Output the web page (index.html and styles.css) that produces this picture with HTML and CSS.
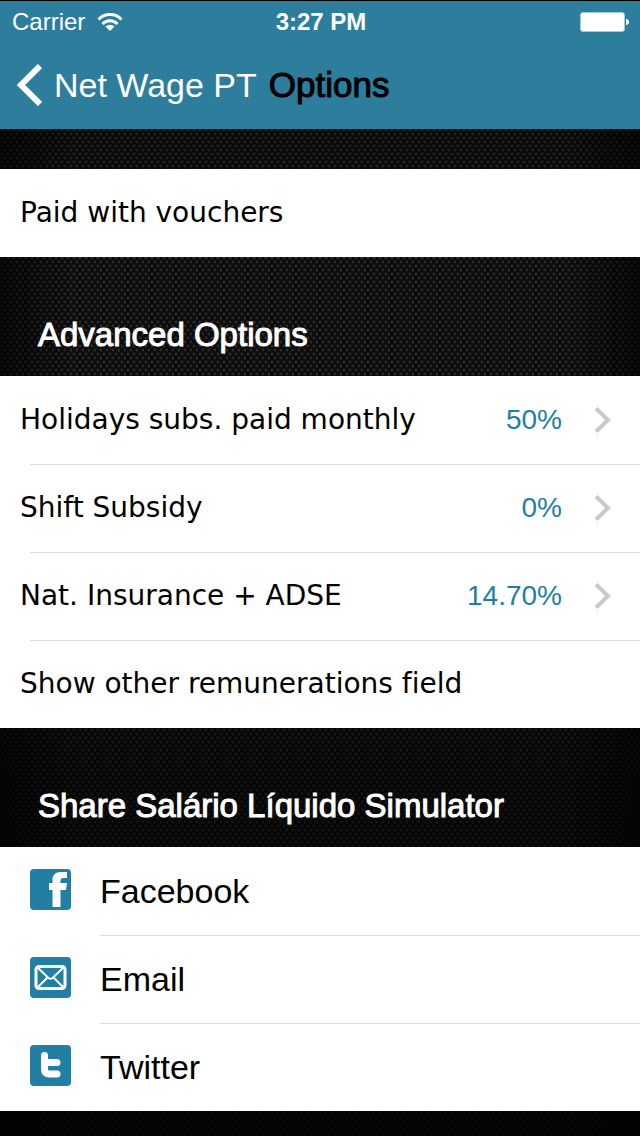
FILE: index.html
```
<!doctype html>
<html lang="en">
<head>
    <meta charset="utf-8">
    <meta name="viewport" content="width=device-width, initial-scale=1">
    <title>Options</title>
    <link rel="stylesheet" href="styles.css">
</head>
<body>
<header class="top">
    <div class="status">
        <div class="carrier">
            <span>Carrier</span>
            <svg class="wifi" viewBox="0 0 26 20" width="26" height="20">
                <path d="M1.500 7.500A16 16 0 0 1 24.500 7.500M5.500 12A10.500 10.500 0 0 1 20.500 12" fill="none" stroke="#fff" stroke-width="3"/>
                <path d="M8.500 14.500A6.500 6.500 0 0 1 17.500 14.500L13 19Z" fill="#fff"/>
            </svg>
        </div>
        <div class="clock">3:27 PM</div>
        <div class="power">
            <svg viewBox="0 0 50 20" width="50" height="20">
                <rect x="0.500" y="0.500" width="44" height="19" rx="2.500" fill="#fff" stroke="#a5cbd9"/>
                <path d="M46 7c4 0 4 6 0 6z" fill="#fff"/>
            </svg>
        </div>
    </div>
    <nav class="navbar">
        <a class="back" href="#">
            <svg viewBox="0 0 26 42" width="26" height="42">
                <path d="M24 2L5 21L24 40" fill="none" stroke="#fff" stroke-width="6"/>
            </svg>
            <span>Net Wage PT</span>
        </a>
        <h1>Options</h1>
    </nav>
</header>

<main>
    <ul class="list first">
        <li><a class="row" href="#"><span class="label">Paid with vouchers</span></a></li>
    </ul>

    <h2>Advanced Options</h2>
    <ul class="list">
        <li><a class="row" href="#">
            <span class="label">Holidays subs. paid monthly</span>
            <span class="value">50%</span>
            <svg class="arrow" viewBox="0 0 18 26" width="18" height="26"><path d="M2 1.500L14 13L2 24.500"/></svg>
        </a></li>
        <li><a class="row" href="#">
            <span class="label">Shift Subsidy</span>
            <span class="value">0%</span>
            <svg class="arrow" viewBox="0 0 18 26" width="18" height="26"><path d="M2 1.500L14 13L2 24.500"/></svg>
        </a></li>
        <li><a class="row" href="#">
            <span class="label">Nat. Insurance + ADSE</span>
            <span class="value">14.70%</span>
            <svg class="arrow" viewBox="0 0 18 26" width="18" height="26"><path d="M2 1.500L14 13L2 24.500"/></svg>
        </a></li>
        <li><a class="row" href="#"><span class="label">Show other remunerations field</span></a></li>
    </ul>

    <h2>Share Salário Líquido Simulator</h2>
    <ul class="list share">
        <li><a class="row" href="#">
            <svg class="icon" viewBox="0 0 41 41" width="41" height="41">
                <rect width="41" height="41" rx="4"/>
                <path class="shape" d="M22.500 38V21H19v-7h3.500v-3c0-5 3-8 8-8H37v6h-3.500c-2 0-3 1-3 3v2H37l-1 7h-5.500v17z"/>
            </svg>
            <span>Facebook</span>
        </a></li>
        <li><a class="row" href="#">
            <svg class="icon" viewBox="0 0 41 41" width="41" height="41">
                <rect width="41" height="41" rx="4"/>
                <rect class="line" x="6" y="9.500" width="29" height="22" rx="3" stroke-width="3"/>
                <path class="line" d="M7 10l11.500 11q2 1.500 4 0l11.500-11M7 31l10.500-10.500M34 31l-10.500-10.500" stroke-width="2"/>
            </svg>
            <span>Email</span>
        </a></li>
        <li><a class="row" href="#">
            <svg class="icon" viewBox="0 0 41 41" width="41" height="41">
                <rect width="41" height="41" rx="4"/>
                <path class="line" d="M14.500 10.500V24Q14.500 29 19.500 29H27M14.500 17.500H27" stroke-width="7" stroke-linecap="round"/>
            </svg>
            <span>Twitter</span>
        </a></li>
    </ul>
</main>
</body>
</html>
```
FILE: styles.css
```
* {
    box-sizing: border-box;
}
body {
    margin: 0;
    min-height: 100vh;
    font-family: "Liberation Sans", Arial, sans-serif;
    color: #000;
    background-color: #0c0c0c;
    background-image:
        linear-gradient(to right, rgba(0, 0, 0, 0.6), transparent 12%, transparent 88%, rgba(0, 0, 0, 0.6)),
        linear-gradient(to bottom, rgba(0, 0, 0, 0.5), transparent 22%, transparent 35%, rgba(0, 0, 0, 0.5) 70%, rgba(0, 0, 0, 0.8)),
        radial-gradient(circle at 2px 2px, #3c3c3c, transparent 2px),
        radial-gradient(circle at 5px 6px, #3c3c3c, transparent 2px);
    background-size: auto, auto, 6px 8px, 6px 8px;
}
a {
    color: inherit;
    text-decoration: none;
}
svg {
    display: block;
    flex: none;
}
h1, h2 {
    margin: 0;
    font-weight: normal;
    -webkit-text-stroke: 1px;
}
.top {
    height: 129px;
    color: #fff;
    background: #2d7d9c;
    border-top: 1px solid #000;
}
.status {
    display: grid;
    grid-template-columns: 1fr auto 1fr;
    align-items: center;
    height: 42px;
    padding: 0 10px 0 12px;
    font-size: 24px;
}
.carrier {
    display: flex;
    align-items: center;
    gap: 12px;
}
.clock {
    font-weight: bold;
}
.power {
    justify-self: end;
}
.navbar {
    display: flex;
    align-items: center;
    height: 84px;
    padding-left: 16px;
    gap: 12px;
}
.back {
    display: flex;
    align-items: center;
    gap: 12px;
    font-size: 34px;
}
h1 {
    color: #000;
    font-size: 35px;
}
h2 {
    height: 119px;
    padding: 59px 38px 0;
    font-size: 33px;
    line-height: 38px;
    color: #fff;
}
.list {
    margin: 0;
    padding: 0;
    list-style: none;
    background: #fff;
}
.first {
    margin-top: 40px;
}
.row {
    display: flex;
    align-items: center;
    height: 88px;
    padding: 0 28px 1px 20px;
}
li + li .row {
    background: linear-gradient(#dcdcdc, #dcdcdc) 30px 0 / 100% 1px no-repeat;
}
.label {
    flex: 1;
    font-family: "DejaVu Sans", Verdana, sans-serif;
    font-size: 28px;
    font-variant-ligatures: none;
}
.value {
    margin-right: 32px;
    font-size: 28px;
    color: #1f7ea5;
}
.arrow {
    fill: none;
    stroke: #c7c7cc;
    stroke-width: 4;
}
.share .row {
    gap: 29px;
    padding: 0 28px 0 30px;
    font-size: 34px;
}
.share li + li .row {
    background-position: 100px 0;
}
.icon {
    margin-bottom: 4px;
    fill: #217fa4;
}
.shape {
    fill: #fff;
}
.line {
    fill: none;
    stroke: #fff;
}
```
